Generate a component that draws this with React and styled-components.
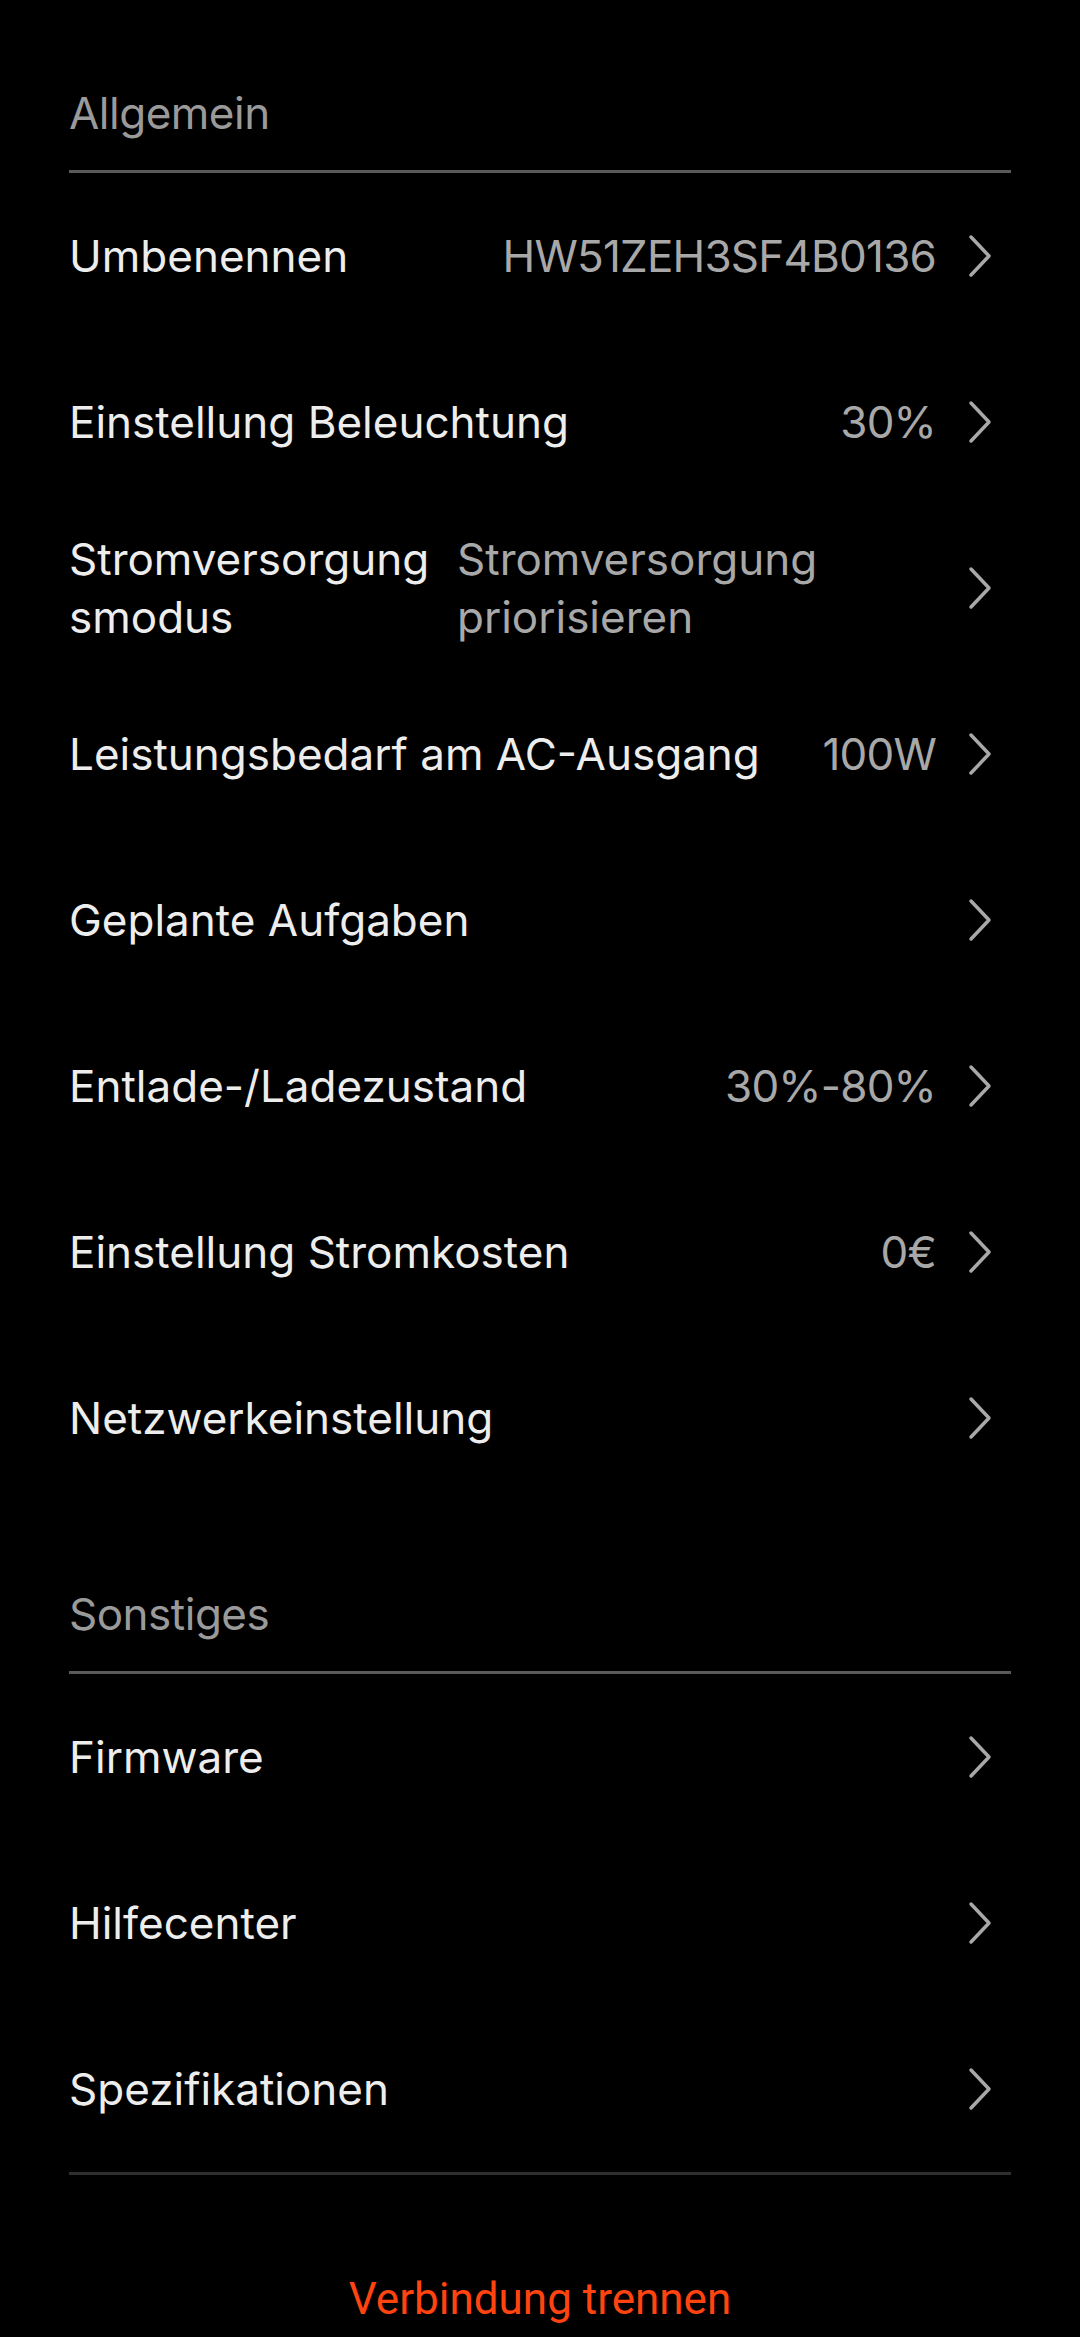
import React from 'react';
import styled, { createGlobalStyle } from 'styled-components';

const GlobalStyle = createGlobalStyle`
  html, body {
    margin: 0;
    padding: 0;
    background: #000;
  }
  body {
    font-family: Inter, "Noto Sans", sans-serif;
    -webkit-font-smoothing: antialiased;
  }
`;

const Page = styled.div`
  min-height: 2337px;
  background: #000;
  padding: 0 69px;
  box-sizing: border-box;
`;

const SectionTitle = styled.div`
  padding: 83px 0 27px;
  font-size: 44px;
  line-height: 60px;
  letter-spacing: -0.5px;
  color: #9a9a9a;
  font-weight: 400;
`;

const Divider = styled.div`
  height: 3px;
  background: ${(p) => (p.$dim ? '#2f2f2f' : '#5a5a5a')};
`;

const Row = styled.div`
  display: flex;
  align-items: center;
  height: 166px;
`;

const Label = styled.div`
  flex: ${(p) => (p.$fixed ? `0 0 ${p.$fixed}px` : '1 1 auto')};
  min-width: 0;
  font-size: 44px;
  line-height: 58px;
  color: #ededed;
`;

const Value = styled.div`
  flex: ${(p) => (p.$fill ? '1 1 auto' : '0 0 auto')};
  margin-left: ${(p) => (p.$fill ? '16px' : 'auto')};
  font-size: 44px;
  line-height: 58px;
  letter-spacing: ${(p) => (p.$fill ? '0' : '-0.8px')};
  color: #a8a8a8;
  text-align: ${(p) => (p.$fill ? 'left' : 'right')};
`;

const Chevron = styled.svg`
  flex: 0 0 auto;
  margin-left: 32px;
  margin-right: 19px;
`;

const Disconnect = styled.div`
  margin-top: 94px;
  text-align: center;
  font-family: Roboto, "Noto Sans", sans-serif;
  font-size: 44px;
  line-height: 60px;
  color: #ff4410;
`;

function Arrow() {
  return (
    <Chevron width="24" height="44" viewBox="0 0 24 44">
      <path d="M3 3 L21 22 L3 41" fill="none" stroke="#a8a8a8" strokeWidth="3.5" strokeLinecap="round" strokeLinejoin="round" />
    </Chevron>
  );
}

function SettingRow({ label, value, split }) {
  return (
    <Row>
      <Label $fixed={split}>{label}</Label>
      {value ? <Value $fill={!!split}>{value}</Value> : null}
      <Arrow />
    </Row>
  );
}

const general = [
  { label: 'Umbenennen', value: 'HW51ZEH3SF4B0136' },
  { label: 'Einstellung Beleuchtung', value: '30%' },
  {
    label: (
      <>
        Stromversorgung<wbr />smodus
      </>
    ),
    value: 'Stromversorgung priorisieren',
    split: 372
  },
  { label: 'Leistungsbedarf am AC-Ausgang', value: '100W' },
  { label: 'Geplante Aufgaben' },
  { label: 'Entlade-/Ladezustand', value: '30%-80%' },
  { label: 'Einstellung Stromkosten', value: '0€' },
  { label: 'Netzwerkeinstellung' }
];

const other = [{ label: 'Firmware' }, { label: 'Hilfecenter' }, { label: 'Spezifikationen' }];

export default function App() {
  return (
    <Page>
      <GlobalStyle />
      <SectionTitle>Allgemein</SectionTitle>
      <Divider />
      {general.map((item, i) => (
        <SettingRow key={i} {...item} />
      ))}
      <SectionTitle>Sonstiges</SectionTitle>
      <Divider />
      {other.map((item, i) => (
        <SettingRow key={i} {...item} />
      ))}
      <Divider $dim />
      <Disconnect>Verbindung trennen</Disconnect>
    </Page>
  );
}
